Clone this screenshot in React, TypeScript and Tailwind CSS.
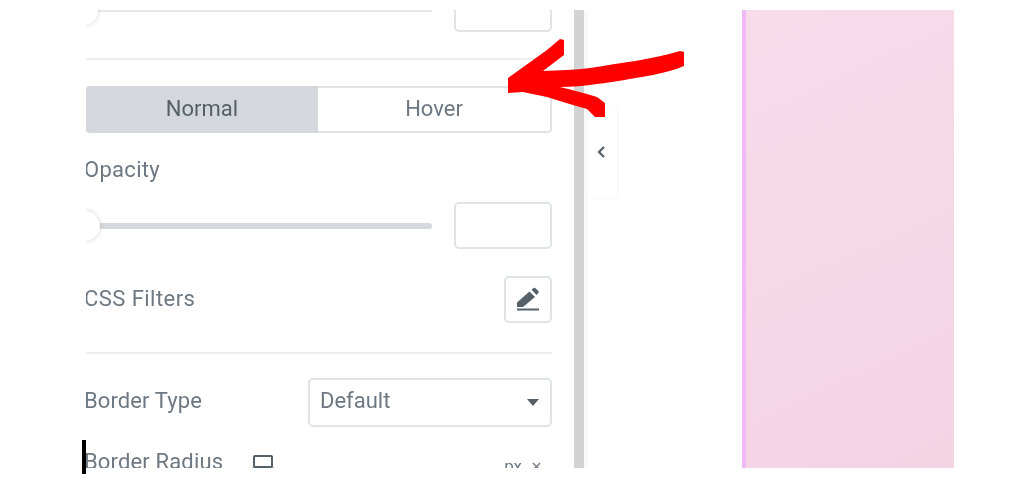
const font = "font-['Roboto',sans-serif]";

function Thumb({ size }: { size: string }) {
  return <div className={`absolute left-[-16px] top-1/2 -translate-y-1/2 rounded-full bg-white shadow-[0_0_5px_rgba(0,0,0,0.18)] ${size}`} />;
}

export default function App() {
  return (
    <div className={`relative flex h-[480px] w-[1014px] overflow-hidden bg-white pb-[12px] pt-[10px] ${font}`}>
      <div className="h-full w-[86px] shrink-0" />
      <div className="h-full w-[488px] shrink-0 overflow-hidden pr-[22px] text-[22px] text-[#6d7882] blur-[0.6px]">
        <div className="relative flex h-[21px] items-start justify-between">
          <div className="relative h-[2px] w-[346px] bg-[#e6e8ea]"><Thumb size="h-[28px] w-[28px]" /></div>
          <div className="h-[22px] w-[98px] rounded-b-[5px] border-x-2 border-b-2 border-[#e1e3e7] bg-white" />
        </div>
        <div className="mt-[27px] h-[2px] bg-[#eceef0]" />
        <div className="mt-[26px] flex h-[47px]">
          <div className="flex w-[232px] items-center justify-center rounded-l-[3px] bg-[#d5d8dc] pb-[3px] text-[#556068]">Normal</div>
          <div className="flex flex-1 items-center justify-center rounded-r-[4px] border-y-2 border-r-2 border-[#e1e3e7] pb-[3px]">Hover</div>
        </div>
        <div className="-ml-[2px] mt-[24px] h-[26px] leading-[26px] tracking-[0.3px]">Opacity</div>
        <div className="mt-[19px] flex items-center justify-between">
          <div className="relative h-[6px] w-[346px] rounded-full bg-[#d5d8dc]"><Thumb size="h-[30px] w-[30px]" /></div>
          <div className="h-[47px] w-[98px] rounded-[5px] border-2 border-[#e1e3e7]" />
        </div>
        <div className="mt-[27px] flex items-center justify-between">
          <span className="-ml-[2px] pb-[3px] tracking-[0.45px]">CSS Filters</span>
          <div className="flex h-[47px] w-[48px] items-center justify-center rounded-[5px] border-2 border-[#e1e3e7]">
            <svg viewBox="0 0 26 26" className="h-[26px] w-[26px]" fill="#556068">
              <path d="M2 15.5 14.5 4.5 20 10 8 20H2Z" />
              <path d="M16.5 2.8 18.6 1a1.2 1.2 0 0 1 1.6 0l3.2 3a1.2 1.2 0 0 1 0 1.7L21.6 8Z" />
              <rect x="2" y="21.5" width="22" height="2" />
            </svg>
          </div>
        </div>
        <div className="mt-[29px] h-[2px] bg-[#eceef0]" />
        <div className="mt-[24px] flex items-center justify-between">
          <span className="-ml-[2px] pb-[5px] tracking-[0.1px]">Border Type</span>
          <div className="flex h-[49px] w-[244px] items-center justify-between rounded-[5px] border-2 border-[#e1e3e7] pl-[10px] pr-[11px]">
            <span className="pb-[5px]">Default</span>
            <div className="h-0 w-0 border-x-[6px] border-t-[7px] border-x-transparent border-t-[#556068]" />
          </div>
        </div>
        <div className="mt-[20px] flex h-[30px] items-center justify-between">
          <div className="-ml-[2px] flex items-center gap-[29px]">
            <span className="pb-[1px] tracking-[0.15px]">Border Radius</span>
            <svg viewBox="0 0 22 18" className="h-[18px] w-[22px]" fill="none" stroke="#556068" strokeWidth="2">
              <rect x="2" y="3" width="18" height="11" rx="1" />
              <path d="M0 15.5h22" />
            </svg>
          </div>
          <div className="mr-[11px] flex items-center gap-[10px] pt-[9px] text-[17px]">
            <span>px</span>
            <svg viewBox="0 0 10 10" className="h-[9px] w-[9px]" fill="none" stroke="#6d7882" strokeWidth="1.5"><path d="m1 1 8 8M9 1l-8 8" /></svg>
          </div>
        </div>
      </div>
      <div className="h-full w-[10px] shrink-0 bg-[#d3d3d3]" />
      <div className="h-full w-[158px] shrink-0 bg-white">
        <div className="h-full w-[4px] bg-[#fafafa]" />
      </div>
      <div className="h-full w-[212px] shrink-0 border-l-[4px] border-[#f0baf8] bg-[linear-gradient(155deg,#f8dcea,#f4d3e3)]" />

      {/* collapse tab overlays the canvas */}
      <div className="absolute left-[588px] top-[108px] flex h-[90px] w-[29px] items-center justify-center rounded-r-[3px] bg-white pb-[2px] pr-[3px] shadow-[1px_0_3px_rgba(0,0,0,0.05)] blur-[0.4px]">
        <svg viewBox="0 0 10 14" className="h-[14px] w-[10px]" fill="none" stroke="#556068" strokeWidth="2.2"><path d="M8 2 3 7l5 5" /></svg>
      </div>

      {/* hand-drawn annotation arrow */}
      <svg viewBox="0 0 1014 480" className="pointer-events-none absolute left-0 top-0 h-[480px] w-[1014px] blur-[0.5px]" fill="#ff0000">
        <path d="M560 39 L564 40 L564 55 L543 71 C560 70 575 70 590 68 C620 63 655 59 680 51 L684 52 L684 66 C675 70 665 72 653 75 C630 79 615 82 597 84 C585 86 572 87 560 87 C572 90 585 93 597 97 L605 103 L605 117 L595 117 L587 109 C572 105 560 101 547 97 L523 92 L508 93 L508 78 L547 50 Z" />
      </svg>

      {/* text cursor */}
      <div className="absolute left-[82px] top-[440px] h-[34px] w-[4px] bg-black" />
    </div>
  );
}
